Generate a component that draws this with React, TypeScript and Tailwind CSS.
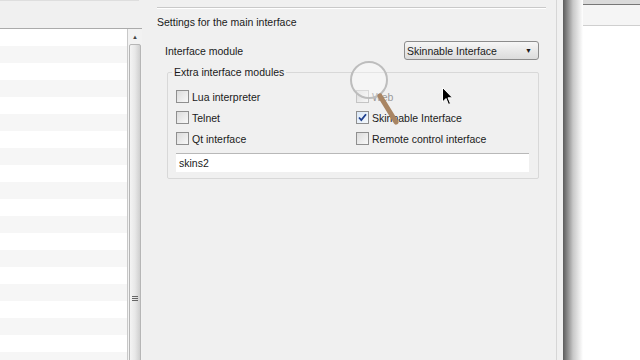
import React from 'react';

const ROWS = Array.from({ length: 20 }, (_, i) => i);

function CheckBox({ checked, faded }: { checked?: boolean; faded?: boolean }) {
  return (
    <span
      className={`w-[13px] h-[13px] shrink-0 border flex items-center justify-center ${
        faded ? 'border-[#c4c4c4]' : 'border-[#8f8f8f]'
      } ${checked ? 'bg-gradient-to-br from-[#dbe8f7] to-[#f4f8fc]' : 'bg-gradient-to-br from-[#dcdcdc] to-[#f8f8f8]'}`}
    >
      {checked && (
        <svg width="9" height="9" viewBox="0 0 9 9">
          <path d="M1 4.5 L3.3 7 L8 1.2" fill="none" stroke="#1e3f8f" strokeWidth="1.8" />
        </svg>
      )}
    </span>
  );
}

function Option({ label, checked, faded }: { label: string; checked?: boolean; faded?: boolean }) {
  return (
    <label className="flex items-center gap-[3px] h-[21px]">
      <CheckBox checked={checked} faded={faded} />
      <span className={faded ? 'text-[#9a9a9a]' : ''}>{label}</span>
    </label>
  );
}

export default function App() {
  return (
    <div className="relative w-[640px] h-[360px] overflow-hidden bg-[#f0f0f0] flex text-[10.5px] leading-[14px] text-[#1a1a1a] font-['Liberation_Sans',Arial,sans-serif]">

      {/* ── left pane: list box ── */}
      <div className="w-[142px] shrink-0 flex flex-col">
        <div className="h-[5px] w-[139px] bg-white border-b border-[#dedede]"></div>
        <div className="mt-[27px] flex flex-1 bg-white border-t border-[#ababab]">
          <div className="flex-1 flex flex-col">
            {ROWS.map(i => (
              <div key={i} className={`h-[17px] shrink-0 ${i % 2 ? 'bg-[#f6f6f6]' : 'bg-white'}`}></div>
            ))}
          </div>
          <div className="w-[15px] flex flex-col border-l border-[#c8c8c8] bg-[#f2f2f2]">
            <div className="h-[15px] flex items-center justify-center text-[6px] text-[#444]">▲</div>
            <div className="flex-1 mx-[1px] border border-[#b6b6b6] rounded-[2px] bg-gradient-to-r from-[#f4f4f4] via-[#e8e8e8] to-[#cfcfcf] flex flex-col items-center justify-end pb-[67px]">
              <div className="flex flex-col gap-[1px]">
                <div className="w-[6px] h-[1px] bg-[#666]"></div>
                <div className="w-[6px] h-[1px] bg-[#666]"></div>
                <div className="w-[6px] h-[1px] bg-[#666]"></div>
              </div>
            </div>
          </div>
        </div>
      </div>

      <div className="w-[8px] shrink-0"></div>

      {/* ── main settings panel ── */}
      <div className="w-[407px] shrink-0 border-r border-[#d6d6d6] flex flex-col pl-[7px] pr-[10px]">
        <div className="mt-[7px] h-[2px] border-t border-[#c9c9c9] border-b border-b-white"></div>
        <div className="mt-[6px] h-[14px]">Settings for the main interface</div>

        <div className="mt-[12px] ml-[8px] mr-[7px] flex items-center justify-between">
          <span>Interface module</span>
          <div className="w-[135px] h-[19px] rounded-[3px] border border-[#8c8c8c] bg-gradient-to-b from-[#f6f6f6] to-[#dcdcdc] flex items-center justify-between pl-[2px] pr-[6px]">
            <span>Skinnable Interface</span>
            <span className="text-[7px]">▼</span>
          </div>
        </div>

        <fieldset className="mt-[5px] ml-[10px] mr-[7px] h-[114px] border border-[#d8d8d8] rounded-[2px] px-[8px]">
          <legend className="px-[2px] -ml-[4px]">Extra interface modules</legend>
          <div className="mt-[7px] grid grid-cols-[180px_1fr]">
            <Option label="Lua interpreter" />
            <Option label="Web" faded />
            <Option label="Telnet" />
            <Option label="Skinnable Interface" checked />
            <Option label="Qt interface" />
            <Option label="Remote control interface" />
          </div>
          <div className="mt-[4px] mr-[1px] h-[19px] bg-white border-t border-[#b8b8b8] flex items-center pl-[3px]">skins2</div>
        </fieldset>
      </div>

      <div className="w-[6px] shrink-0"></div>
      <div className="w-[20px] shrink-0 bg-gradient-to-r from-[#5c5c5c] via-[#c8c8c8] to-white"></div>

      {/* ── window behind ── */}
      <div className="flex-1 flex flex-col bg-white">
        <div className="h-[4px] bg-[#dadada]"></div>
        <div className="h-[22px] bg-[#f5f5f5] border-t border-[#777] border-b border-b-[#cfcfcf]"></div>
      </div>

      {/* magnifier cursor overlay */}
      <svg className="absolute left-[345px] top-[58px]" width="60" height="70" viewBox="0 0 60 70">
        <circle cx="24" cy="22" r="18" fill="rgba(255,255,255,0.35)" stroke="#bdbdbd" strokeWidth="2" />
        <line x1="35" y1="38" x2="51" y2="64" stroke="#a98563" strokeWidth="5" strokeLinecap="round" />
      </svg>

      {/* mouse pointer */}
      <svg className="absolute left-[442px] top-[87px]" width="12" height="20" viewBox="0 0 12 20">
        <path d="M0.5 0.5 L0.5 15 L4 11.5 L6.5 17.5 L8.5 16.5 L6 10.8 L10.5 10.8 Z" fill="#000" stroke="#fff" strokeWidth="1" />
      </svg>
    </div>
  );
}
